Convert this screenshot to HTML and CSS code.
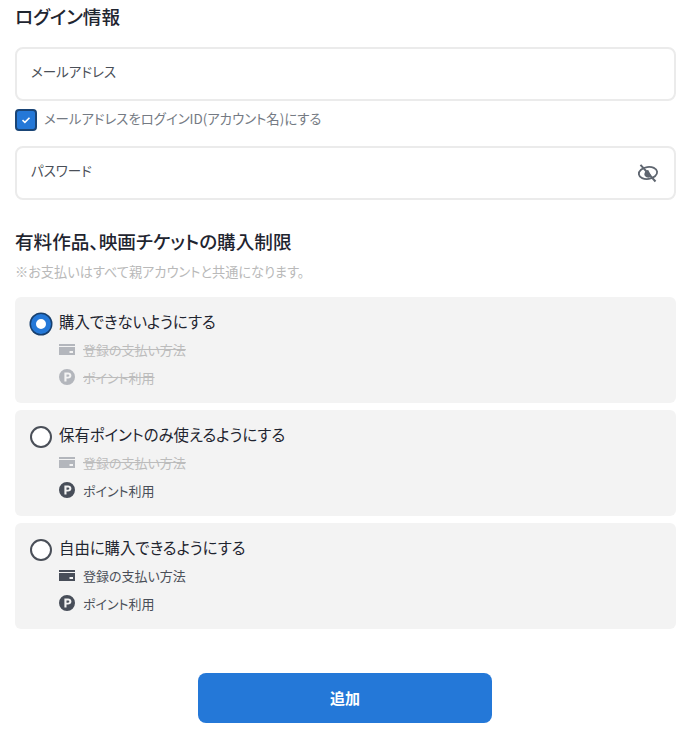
FILE: index.html
```html
<!DOCTYPE html>
<html lang="ja">
<head>
  <meta charset="UTF-8">
  <title>ログイン情報</title>
  <link rel="stylesheet" href="styles.css">
</head>
<body>
  <svg class="defs" width="0" height="0">
    <symbol id="icon-card" viewBox="0 0 16 11">
      <path d="M0 0h16v2H0zM0 3h16v8H0zm10.500 4v2h3.500V7z" fill-rule="evenodd"/>
    </symbol>
    <symbol id="icon-point" viewBox="0 0 16 16">
      <path fill-rule="evenodd" d="M8 0a8 8 0 1 1 0 16A8 8 0 0 1 8 0zM5.400 3.600v8.800h2.100V9.600h1.500c2 0 3.400-1.200 3.400-3S11 3.600 9 3.600zm2.100 1.800h1.300c1 0 1.500.4 1.500 1.200s-.5 1.200-1.500 1.200H7.500z"/>
    </symbol>
  </svg>

  <div class="container">
    <h2 class="title">ログイン情報</h2>
    <div class="field"><span>メールアドレス</span></div>
    <label class="check-row">
      <span class="checkbox">
        <svg width="10" height="8" viewBox="0 0 10 8"><path d="M1.500 4.200 3.900 6.300 8.500 1.700" fill="none" stroke="#fff" stroke-width="1.600"/></svg>
      </span>
      <span>メールアドレスをログインID(アカウント名)にする</span>
    </label>
    <div class="field field-password">
      <span>パスワード</span>
      <svg class="eye" width="22" height="20" viewBox="0 0 22 20" fill="none" stroke="#5f6670" stroke-width="1.800">
        <ellipse cx="11" cy="10" rx="9.200" ry="6" transform="rotate(-8 11 10)"/>
        <path d="M7.800 9.500a3.200 3.200 0 0 1 3.400-2.600l3 5.600a3.200 3.200 0 0 1-6.400-3z" fill="#5f6670" stroke="none"/>
        <path d="M3.500 1.800 18.500 18.500" stroke-width="2"/>
      </svg>
    </div>

    <h2 class="title title-limit">有料作品、映画チケットの購入制限</h2>
    <p class="note">※お支払いはすべて親アカウントと共通になります。</p>

    <div class="options">
      <div class="option">
        <div class="option-head"><span class="radio radio-on"></span>購入できないようにする</div>
        <div class="method off"><svg class="method-icon card"><use href="#icon-card"/></svg><span>登録の支払い方法</span></div>
        <div class="method off"><svg class="method-icon"><use href="#icon-point"/></svg><span>ポイント利用</span></div>
      </div>
      <div class="option">
        <div class="option-head"><span class="radio"></span>保有ポイントのみ使えるようにする</div>
        <div class="method off"><svg class="method-icon card"><use href="#icon-card"/></svg><span>登録の支払い方法</span></div>
        <div class="method"><svg class="method-icon"><use href="#icon-point"/></svg><span>ポイント利用</span></div>
      </div>
      <div class="option">
        <div class="option-head"><span class="radio"></span>自由に購入できるようにする</div>
        <div class="method"><svg class="method-icon card"><use href="#icon-card"/></svg><span>登録の支払い方法</span></div>
        <div class="method"><svg class="method-icon"><use href="#icon-point"/></svg><span>ポイント利用</span></div>
      </div>
    </div>

    <button class="submit">追加</button>
  </div>
</body>
</html>
```

FILE: styles.css
```css
* {
  box-sizing: border-box;
}
body {
  margin: 0;
  background-color: #fff;
  color: #1f2530;
  font-family: "Noto Sans CJK JP", "Noto Sans", sans-serif;
  font-feature-settings: "palt";
}
.defs {
  position: absolute;
}
.container {
  width: 661px;
  margin-left: 15px;
  padding-top: 4px;
}
.title {
  margin: 0;
  font-size: 18.600px;
  line-height: 24px;
  font-weight: 500;
}
.field {
  height: 54px;
  margin-top: 19px;
  padding: 0 14px 6px;
  display: flex;
  align-items: center;
  justify-content: space-between;
  border: 2px solid #ebebeb;
  border-radius: 8px;
  font-size: 13.500px;
  color: #4a4f58;
}
.field-password {
  margin-top: 15px;
}
.eye {
  margin: 6px 1px 0 0;
}
.check-row {
  display: flex;
  align-items: center;
  gap: 7px;
  margin-top: 8px;
  font-size: 13.400px;
  line-height: 22px;
  color: #747a83;
}
.check-row span:last-child {
  margin-top: -4px;
}
.checkbox {
  width: 22px;
  height: 22px;
  display: flex;
  align-items: center;
  justify-content: center;
  background-color: #2478d8;
  border: 2px solid #1a4576;
  border-radius: 4px;
}
.title-limit {
  margin-top: 29px;
}
.note {
  margin: 9px 0 0;
  font-size: 13.200px;
  line-height: 20px;
  color: #b9b9b9;
}
.options {
  display: flex;
  flex-direction: column;
  gap: 7px;
  margin-top: 15px;
}
.option {
  height: 106px;
  padding: 12px 15px 0;
  background-color: #f3f3f3;
  border-radius: 6px;
}
.option-head {
  display: flex;
  align-items: center;
  gap: 7px;
  height: 24px;
  font-size: 15.400px;
  font-weight: 400;
}
.radio {
  width: 22px;
  height: 22px;
  margin-top: 6px;
  border: 2px solid #4a4f58;
  border-radius: 50%;
  background-color: #fff;
}
.radio-on {
  width: 20px;
  height: 20px;
  margin: 6px 1px 0;
  border: 5.500px solid #2478d8;
  box-shadow: 0 0 0 1.500px #173f6e;
}
.method {
  display: flex;
  align-items: center;
  gap: 8px;
  height: 28px;
  margin-left: 29px;
  font-size: 13px;
  color: #4a4f58;
}
.method:nth-child(2) {
  margin-top: 2px;
}
.method-icon {
  width: 16px;
  height: 16px;
  fill: #484e59;
}
.method-icon.card {
  height: 11px;
}
.off {
  color: #bcbcbc;
}
.off span {
  text-decoration: line-through;
}
.off .method-icon {
  fill: #b3b6bc;
}
.submit {
  display: block;
  width: 294px;
  height: 50px;
  margin: 44px 0 0 183px;
  padding-bottom: 3px;
  border: none;
  border-radius: 8px;
  background-color: #2478d8;
  color: #fff;
  font-family: inherit;
  font-size: 15px;
  font-weight: 700;
}
```
